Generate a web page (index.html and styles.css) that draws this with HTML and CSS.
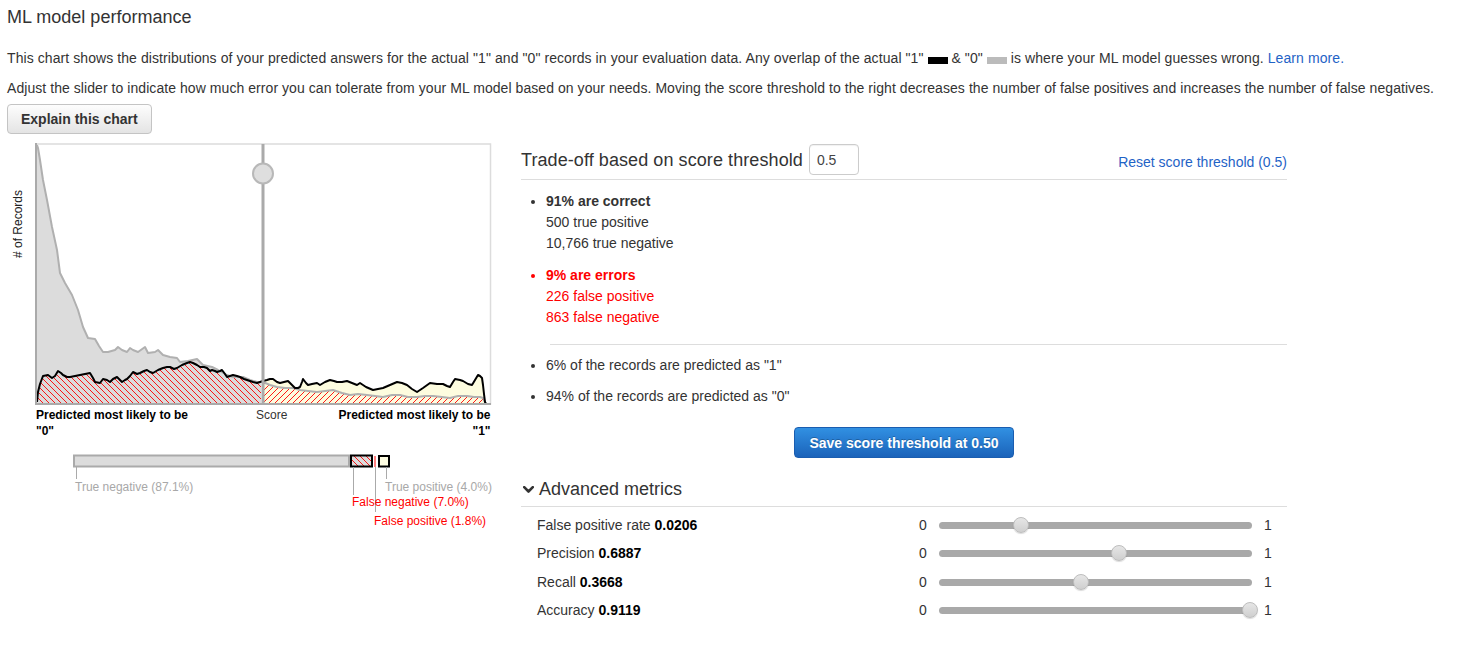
FILE: index.html
```html
<!DOCTYPE html>
<html>
<head>
<meta charset="utf-8">
<title>ML model performance</title>
<link rel="stylesheet" href="styles.css">
</head>
<body>
<div class="page">
  <h1 class="title">ML model performance</h1>
  <p class="intro">This chart shows the distributions of your predicted answers for the actual "1" and "0" records in your evaluation data. Any overlap of the actual "1" <span class="swatch swatch-black"></span> &amp; "0" <span class="swatch swatch-gray"></span> is where your ML model guesses wrong. <a class="link" href="#">Learn more.</a></p>
  <p class="intro intro-2">Adjust the slider to indicate how much error you can tolerate from your ML model based on your needs. Moving the score threshold to the right decreases the number of false positives and increases the number of false negatives.</p>
  <button class="btn">Explain this chart</button>

  <div class="perf">
    <div class="chart-col">
      <svg class="chart" width="493" height="390" viewBox="7 140 493 390" xmlns="http://www.w3.org/2000/svg">
        <defs>
          <pattern id="hatchL" patternUnits="userSpaceOnUse" width="6" height="6">
            <path d="M-3,3 L3,9 M0,0 L6,6 M3,-3 L9,3" stroke="#ff0000" stroke-width="0.9"/>
          </pattern>
          <pattern id="hatchR" patternUnits="userSpaceOnUse" width="6" height="6">
            <path d="M-3,3 L3,-3 M0,6 L6,0 M3,9 L9,3" stroke="#ff0000" stroke-width="0.9"/>
          </pattern>
          <clipPath id="clipL"><rect x="37" y="144" width="224" height="260"/></clipPath>
          <clipPath id="clipR"><rect x="264" y="144" width="226" height="260"/></clipPath>
        </defs>

        <rect x="36" y="144" width="454.5" height="260" fill="#fff" stroke="#dcdcdc" stroke-width="1.5"/>

        <g clip-path="url(#clipL)">
          <path fill="#dcdcdc" d="M37,145 L38,148 L40,160 L43,180 L47,200 L52,227 L57,250 L60,273 L65,283 L72,295 L78,310 L83,327 L88,338 L95,339 L99,346 L103,352 L108,352 L115,350 L118,347 L122,350 L127,352 L130,348 L133,350 L138,352 L145,347 L148,353 L155,352 L158,350 L163,355 L170,357 L177,358 L180,362 L188,361 L197,359 L203,365 L212,367 L218,370 L227,375 L233,377 L243,377 L250,380 L257,382 L263,382 L263,404 L36,404 Z"/>
          <path fill="#dcdcdc" d="M37,402 L38,392 L40,384 L43,376 L48,375 L52,378 L55,376 L58,371 L61,373 L63,375 L67,377 L70,377 L75,376 L80,375 L85,374 L90,373 L93,378 L95,382 L100,383 L103,379 L107,380 L110,382 L113,379 L117,377 L120,380 L122,382 L125,380 L127,379 L130,376 L133,372 L137,374 L140,373 L144,371 L147,370 L150,372 L153,373 L158,370 L163,368 L167,367 L170,367 L174,369 L177,368 L182,365 L187,363 L190,362 L193,363 L197,365 L200,367 L204,367 L207,368 L210,371 L212,370 L215,371 L217,372 L220,371 L222,370 L225,374 L227,377 L230,376 L233,375 L237,376 L240,377 L244,379 L247,380 L250,381 L253,382 L257,383 L260,382 L263,381 L263,404 L36,404 Z"/>
          <path fill="url(#hatchL)" d="M37,402 L38,392 L40,384 L43,376 L48,375 L52,378 L55,376 L58,371 L61,373 L63,375 L67,377 L70,377 L75,376 L80,375 L85,374 L90,373 L93,378 L95,382 L100,383 L103,379 L107,380 L110,382 L113,379 L117,377 L120,380 L122,382 L125,380 L127,379 L130,376 L133,372 L137,374 L140,373 L144,371 L147,370 L150,372 L153,373 L158,370 L163,368 L167,367 L170,367 L174,369 L177,368 L182,365 L187,363 L190,362 L193,363 L197,365 L200,367 L204,367 L207,368 L210,371 L212,370 L215,371 L217,372 L220,371 L222,370 L225,374 L227,377 L230,376 L233,375 L237,376 L240,377 L244,379 L247,380 L250,381 L253,382 L257,383 L260,382 L263,381 L263,404 L36,404 Z"/>
        </g>

        <g clip-path="url(#clipR)">
          <path fill="#fdfcdf" d="M263,381 L267,380 L270,379 L273,379 L277,382 L280,383 L284,382 L288,381 L292,385 L295,388 L298,388 L300,387 L302,382 L303,379 L306,383 L308,385 L312,384 L317,383 L320,385 L325,382 L330,380 L334,381 L337,382 L342,382 L347,381 L352,383 L357,385 L360,383 L366,387 L373,390 L378,389 L383,388 L390,385 L397,382 L402,383 L407,385 L412,389 L417,392 L423,388 L430,383 L437,384 L443,384 L447,386 L450,387 L453,382 L455,379 L460,380 L463,381 L468,384 L472,385 L475,380 L478,375 L480,376 L482,378 L483,385 L484,394 L485,402 L486,404 L263,404 Z"/>
          <path fill="url(#hatchR)" d="M263,382 L270,385 L277,387 L285,388 L293,388 L300,390 L308,391 L317,392 L325,391 L333,390 L342,393 L350,395 L358,394 L367,395 L375,396 L383,397 L392,395 L400,395 L408,397 L417,397 L425,396 L433,396 L442,397 L450,398 L458,396 L467,396 L474,397 L480,397 L483,398 L485,402 L486,404 L263,404 Z"/>
        </g>

        <path fill="none" stroke="#b0b0b0" stroke-width="2" stroke-linejoin="round" d="M37,145 L38,148 L40,160 L43,180 L47,200 L52,227 L57,250 L60,273 L65,283 L72,295 L78,310 L83,327 L88,338 L95,339 L99,346 L103,352 L108,352 L115,350 L118,347 L122,350 L127,352 L130,348 L133,350 L138,352 L145,347 L148,353 L155,352 L158,350 L163,355 L170,357 L177,358 L180,362 L188,361 L197,359 L203,365 L212,367 L218,370 L227,375 L233,377 L243,377 L250,380 L257,382 L263,382 L270,385 L277,387 L285,388 L293,388 L300,390 L308,391 L317,392 L325,391 L333,390 L342,393 L350,395 L358,394 L367,395 L375,396 L383,397 L392,395 L400,395 L408,397 L417,397 L425,396 L433,396 L442,397 L450,398 L458,396 L467,396 L474,397 L480,397 L483,398 L485,402 L486,404"/>
        <path fill="none" stroke="#000" stroke-width="2" stroke-linejoin="round" d="M37,402 L38,392 L40,384 L43,376 L48,375 L52,378 L55,376 L58,371 L61,373 L63,375 L67,377 L70,377 L75,376 L80,375 L85,374 L90,373 L93,378 L95,382 L100,383 L103,379 L107,380 L110,382 L113,379 L117,377 L120,380 L122,382 L125,380 L127,379 L130,376 L133,372 L137,374 L140,373 L144,371 L147,370 L150,372 L153,373 L158,370 L163,368 L167,367 L170,367 L174,369 L177,368 L182,365 L187,363 L190,362 L193,363 L197,365 L200,367 L204,367 L207,368 L210,371 L212,370 L215,371 L217,372 L220,371 L222,370 L225,374 L227,377 L230,376 L233,375 L237,376 L240,377 L244,379 L247,380 L250,381 L253,382 L257,383 L260,382 L263,381 L267,380 L270,379 L273,379 L277,382 L280,383 L284,382 L288,381 L292,385 L295,388 L298,388 L300,387 L302,382 L303,379 L306,383 L308,385 L312,384 L317,383 L320,385 L325,382 L330,380 L334,381 L337,382 L342,382 L347,381 L352,383 L357,385 L360,383 L366,387 L373,390 L378,389 L383,388 L390,385 L397,382 L402,383 L407,385 L412,389 L417,392 L423,388 L430,383 L437,384 L443,384 L447,386 L450,387 L453,382 L455,379 L460,380 L463,381 L468,384 L472,385 L475,380 L478,375 L480,376 L482,378 L483,385 L484,394 L485,402 L486,404"/>

        <line x1="36" y1="143" x2="36" y2="405" stroke="#aaa" stroke-width="2"/>
        <line x1="35" y1="404" x2="491" y2="404" stroke="#aaa" stroke-width="2"/>

        <line x1="263" y1="144" x2="263" y2="404" stroke="#aaa" stroke-width="3"/>
        <circle cx="263" cy="173.5" r="10" fill="#dedede" stroke="#b8b8b8" stroke-width="2"/>

        <text class="axis-label" transform="translate(21.5,224) rotate(-90)" text-anchor="middle"># of Records</text>

        <text class="lbl-bold" x="36" y="418.5">Predicted most likely to be</text>
        <text class="lbl-bold" x="36" y="434.5">"0"</text>
        <text class="lbl" x="256" y="418.5">Score</text>
        <text class="lbl-bold" x="490.5" y="418.5" text-anchor="end">Predicted most likely to be</text>
        <text class="lbl-bold" x="490.5" y="434.5" text-anchor="end">"1"</text>

        <rect x="74" y="455.5" width="275" height="11" fill="#dcdcdc" stroke="#aaa" stroke-width="2"/>
        <rect x="351" y="455.5" width="21" height="11" fill="#dcdcdc"/>
        <rect x="351" y="455.5" width="21" height="11" fill="url(#hatchL)" stroke="#000" stroke-width="2"/>
        <line x1="375" y1="456" x2="375" y2="467" stroke="#f00" stroke-width="1"/>
        <rect x="379" y="456" width="10" height="10.5" fill="#fefde2" stroke="#000" stroke-width="2"/>

        <line x1="76.5" y1="467" x2="76.5" y2="479" stroke="#aaa" stroke-width="1"/>
        <line x1="353.5" y1="467" x2="353.5" y2="495" stroke="#aaa" stroke-width="1"/>
        <line x1="375.5" y1="467" x2="375.5" y2="512" stroke="#aaa" stroke-width="1"/>
        <line x1="386.5" y1="467" x2="386.5" y2="479" stroke="#aaa" stroke-width="1"/>

        <text class="leg leg-gray" x="75" y="491">True negative (87.1%)</text>
        <text class="leg leg-gray" x="385" y="491">True positive (4.0%)</text>
        <text class="leg leg-red" x="352" y="506">False negative (7.0%)</text>
        <text class="leg leg-red" x="374" y="525">False positive (1.8%)</text>
      </svg>
    </div>

    <div class="panel">
      <div class="panel-head">
        <span class="panel-title">Trade-off based on score threshold</span>
        <input class="threshold-input" type="text" value="0.5">
        <a class="link reset" href="#">Reset score threshold (0.5)</a>
      </div>
      <ul class="stats">
        <li><b>91% are correct</b><br>500 true positive<br>10,766 true negative</li>
        <li class="err"><b>9% are errors</b><br>226 false positive<br>863 false negative</li>
      </ul>
      <hr class="sep">
      <ul class="stats preds">
        <li>6% of the records are predicted as "1"</li>
        <li>94% of the records are predicted as "0"</li>
      </ul>
      <div class="save-row"><button class="btn-primary">Save score threshold at 0.50</button></div>
      <h2 class="adv"><svg class="chev" width="11" height="8" viewBox="0 0 11 8"><path d="M1.2,1.2 L5.5,5.5 L9.8,1.2" fill="none" stroke="#333" stroke-width="2.6" stroke-linecap="round" stroke-linejoin="round"/></svg>Advanced metrics</h2>
      <div class="metrics">
        <div class="metric">
          <span class="m-label">False positive rate <b>0.0206</b></span>
          <span class="m-end">0</span>
          <div class="track"><span class="knob" style="left:26.2%"></span></div>
          <span class="m-end">1</span>
        </div>
        <div class="metric">
          <span class="m-label">Precision <b>0.6887</b></span>
          <span class="m-end">0</span>
          <div class="track"><span class="knob" style="left:57.5%"></span></div>
          <span class="m-end">1</span>
        </div>
        <div class="metric">
          <span class="m-label">Recall <b>0.3668</b></span>
          <span class="m-end">0</span>
          <div class="track"><span class="knob" style="left:45.3%"></span></div>
          <span class="m-end">1</span>
        </div>
        <div class="metric">
          <span class="m-label">Accuracy <b>0.9119</b></span>
          <span class="m-end">0</span>
          <div class="track"><span class="knob" style="left:99.3%"></span></div>
          <span class="m-end">1</span>
        </div>
      </div>
    </div>
  </div>
</div>
</body>
</html>
```

FILE: styles.css
```css
* { box-sizing: border-box; }

body {
  margin: 0;
  background: #fff;
  color: #333;
  font-family: "Liberation Sans", Arial, sans-serif;
  font-size: 14px;
}

.page {
  padding: 0 7px;
}

.title {
  margin: 6px 0 0;
  font-size: 18px;
  line-height: 22px;
  font-weight: normal;
  color: #333;
}

.intro {
  margin: 20px 0 0;
  font-size: 14px;
  line-height: 20px;
  letter-spacing: 0.08px;
}

.intro-2 {
  margin-top: 10px;
  letter-spacing: 0.06px;
}

.swatch {
  display: inline-block;
  width: 20px;
  height: 7px;
  vertical-align: -1px;
}

.swatch-black { background: #000; }
.swatch-gray { background: #bbb; }

.link {
  color: #1f63c6;
  text-decoration: none;
}

.btn {
  display: block;
  margin-top: 6px;
  height: 30px;
  padding: 0 13px;
  border: 1px solid #c4c4c4;
  border-radius: 4px;
  background: linear-gradient(#fdfdfd, #e4e4e4);
  color: #333;
  font-family: "Liberation Sans", Arial, sans-serif;
  font-size: 14px;
  font-weight: bold;
}

.perf {
  display: flex;
  align-items: flex-start;
  gap: 21px;
  margin-top: 6px;
}

.chart-col {
  width: 493px;
  flex: none;
}

.chart {
  display: block;
}

.chart text {
  font-family: "Liberation Sans", Arial, sans-serif;
  font-size: 12px;
}

.axis-label { fill: #222; }
.lbl-bold { fill: #000; font-weight: bold; }
.lbl { fill: #333; }
.leg-gray { fill: #a8a8a8; }
.leg-red { fill: #ff0000; }

.panel {
  width: 766px;
  flex: none;
  padding-top: 4px;
}

.panel-head {
  display: flex;
  align-items: center;
  height: 36px;
  padding-bottom: 4px;
  border-bottom: 1px solid #dddddd;
}

.panel-title {
  font-size: 18px;
  line-height: 22px;
  color: #333;
  letter-spacing: 0.08px;
}

.threshold-input {
  width: 50px;
  height: 31px;
  margin-left: 6px;
  padding: 0 7px;
  border: 1px solid #cccccc;
  border-radius: 4px;
  box-shadow: inset 0 1px 1px rgba(0, 0, 0, 0.06);
  color: #444;
  font-family: "Liberation Sans", Arial, sans-serif;
  font-size: 14px;
}

.reset {
  margin-left: auto;
  padding-top: 5px;
  line-height: 20px;
}

.stats {
  margin: 11px 0 0;
  padding-left: 25px;
  list-style: disc;
  line-height: 21px;
}

.stats li + li {
  margin-top: 11px;
}

.stats b {
  font-weight: bold;
}

.stats .err {
  color: #f00;
}

.sep {
  margin: 16px 0 0 29px;
  height: 0;
  border: 0;
  border-top: 1px solid #dddddd;
}

.preds {
  margin-top: 10px;
}

.preds li + li {
  margin-top: 10px;
}

.save-row {
  display: flex;
  justify-content: center;
  margin-top: 20px;
}

.btn-primary {
  height: 31px;
  padding: 0 14px;
  border: 1px solid #1a5db0;
  border-radius: 4px;
  background: linear-gradient(#3190e2, #1b63ba);
  color: #fff;
  font-family: "Liberation Sans", Arial, sans-serif;
  font-size: 14px;
  font-weight: bold;
  text-shadow: 0 -1px 0 rgba(0, 0, 0, 0.25);
}

.adv {
  display: flex;
  align-items: center;
  margin: 19px 0 0;
  padding-bottom: 5px;
  border-bottom: 1px solid #dddddd;
  font-size: 18px;
  line-height: 24px;
  font-weight: normal;
  color: #333;
}

.chev {
  margin: 1px 5px 0 2px;
  flex: none;
}

.metrics {
  margin-top: 4px;
}

.metric {
  display: grid;
  grid-template-columns: 370px 8px 313px 8px;
  justify-content: start;
  column-gap: 12px;
  align-items: center;
  height: 28px;
  padding-left: 16px;
}

.metric:nth-child(3) {
  height: 29px;
  padding-top: 1px;
}

.m-label b {
  color: #000;
}

.m-end {
  color: #333;
}

.track {
  position: relative;
  height: 7px;
  border-radius: 4px;
  background: #a9a9a9;
}

.knob {
  position: absolute;
  top: 50%;
  width: 16px;
  height: 16px;
  border-radius: 50%;
  border: 1px solid #bdbdbd;
  background: linear-gradient(#e6e6e6, #cfcfcf);
  box-shadow: 0 1px 1px rgba(0, 0, 0, 0.15);
  transform: translate(-50%, -50%);
}
```
